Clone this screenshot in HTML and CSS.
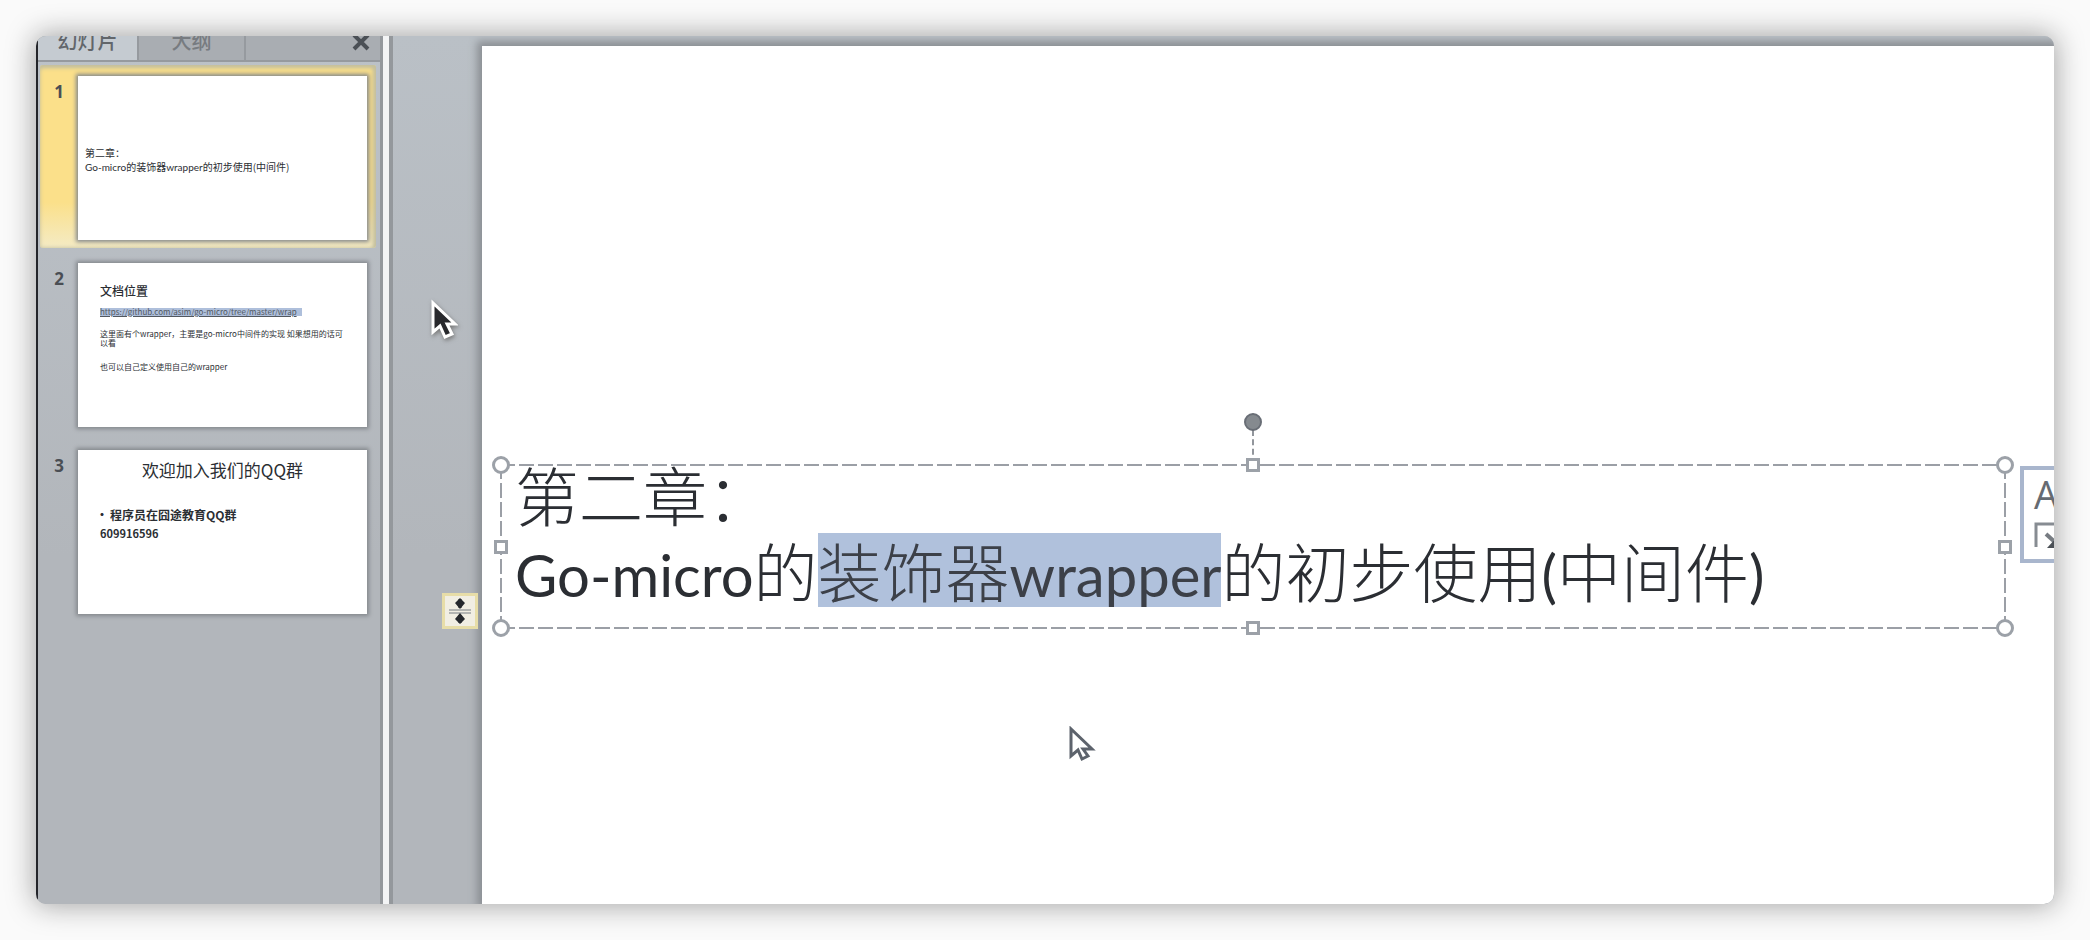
FILE: index.html
```html
<!DOCTYPE html>
<html lang="zh-CN">
<head>
<meta charset="utf-8">
<title>幻灯片</title>
<link rel="stylesheet" href="styles.css">
</head>
<body>
<main class="window">
  <aside class="sidebar">
    <nav class="tabs">
      <button class="tab tab-active">幻灯片</button>
      <button class="tab">大纲</button>
      <button class="close" aria-label="关闭"><svg width="20" height="20" viewBox="0 0 20 20"><path d="M3 3l14 14M17 3L3 17" stroke="#4b5056" stroke-width="4"/></svg></button>
    </nav>
    <ol class="slides">
      <li class="item item-active"><span class="number">1</span>
        <div class="thumb thumb-title"><p>第二章：</p><p><span class="small-latin">Go-micro</span>的装饰器<span class="small-latin">wrapper</span>的初步使用(中间件)</p></div></li>
      <li class="item"><span class="number">2</span>
        <div class="thumb thumb-doc"><h3>文档位置</h3><a href="#">https://github.com/asim/go-micro/tree/master/wrap</a><p>这里面有个wrapper，主要是go-micro中间件的实现 如果想用的话可以看</p><p class="last">也可以自己定义使用自己的wrapper</p></div></li>
      <li class="item"><span class="number">3</span>
        <div class="thumb thumb-group"><h3>欢迎加入我们的QQ群</h3><p class="bullet">程序员在囧途教育QQ群</p><p class="group-number">609916596</p></div></li>
    </ol>
  </aside>
  <div class="splitter"></div>
  <section class="workspace">
    <article class="slide">
      <div class="textbox">
        <h1>第二章：<br><span class="latin">Go-micro</span>的<mark>装饰器<span class="latin">wrapper</span></mark>的初步使用<span class="latin">(</span>中间件<span class="latin">)</span></h1>
        <span class="stem"></span><span class="rotate"></span>
        <i class="handle round top left"></i><i class="handle top center"></i><i class="handle round top right"></i>
        <i class="handle middle left"></i><i class="handle middle right"></i>
        <i class="handle round bottom left"></i><i class="handle bottom center"></i><i class="handle round bottom right"></i>
      </div>
      <div class="minibar"><span>A</span><svg width="32" height="30" viewBox="0 0 32 30"><path d="M2 25V2h30" fill="none" stroke="#878c92" stroke-width="3"/><path d="M12 12l10 9" stroke="#777c82" stroke-width="4"/><path d="M24 14v12H13z" fill="#4b5056"/></svg></div>
      <svg class="pointer-light" width="28" height="38" viewBox="0 0 28 38"><path d="M3 3v27l7-6 4 9 6-3-5-7h9z" fill="#fff" stroke="#5d636c" stroke-width="3"/></svg>
    </article>
    <button class="fit" aria-label="自动调整选项"><svg width="24" height="26" viewBox="0 0 24 26"><path d="M1 12h22M1 15h22" stroke="#777c82" stroke-width="1"/><path d="M12 1v9M12 17v8" stroke="#25282d" stroke-width="3"/><path d="M7 5l5-5 5 5-5 6zM7 21l5 5 5-5-5-6z" fill="#25282d"/></svg></button>
    <svg class="pointer-dark" width="28" height="42" viewBox="0 0 28 42"><path d="M3 4v29l7-6 5 11 7-3-5-10h8z" fill="#28292d" stroke="#fff" stroke-width="3"/></svg>
  </section>
</main>
</body>
</html>
```
FILE: styles.css
```css
* { box-sizing: border-box; }
body { margin: 0; min-height: 100vh; padding: 36px; display: flex; background: #fafafa; font-family: "Noto Sans CJK SC", sans-serif; color: #2b2e33; }
h1, h3, p, ol { margin: 0; padding: 0; font-weight: 400; }
button { border: 0; padding: 0; font-family: inherit; }
.window { flex: 1; display: flex; overflow: hidden; border-radius: 10px; box-shadow: 0 0 28px 2px #a4a4a4; background: #b2b6bb; }
.sidebar { width: 344px; flex: none; border-left: 2px solid #24252a; background: linear-gradient(#bcc2c8, #b2b6bb 60%); }
.tabs { display: flex; height: 26px; background: #a9adb2; border-bottom: 2px solid #969a9f; overflow: hidden; }
.tab { width: 107px; height: 26px; border-right: 2px solid #969a9f; background: #a9adb2; font-size: 20px; line-height: 10px; padding-bottom: 16px; font-weight: 500; color: #777b80; }
.tab-active { width: 101px; background: #c5cbd1; color: #62666b; }
.close { margin-left: auto; margin-right: 9px; width: 20px; height: 20px; background: none; display: flex; }
.close svg { margin-top: -4px; }
.slides { list-style: none; padding: 3px 4px 0 2px; }
.item { display: flex; padding: 11px 9px 8px 0; height: 183px; margin-bottom: 4px; }
.item-active { background: linear-gradient(#fbe08a 75%, #f4ebc5); box-shadow: inset -3px 0 4px #c3bf9e, inset 0 3px 4px #c3bf9e; border-radius: 3px; }
.number { width: 38px; flex: none; text-align: center; font: bold 17px/32px "Open Sans", sans-serif; color: #4a4e54; }
.thumb { flex: 1; height: 164px; background: #fff; box-shadow: 0 0 4px 2px #84888d; overflow: hidden; }
.thumb-title { padding: 70px 0 0 7px; font-size: 10px; line-height: 14px; font-weight: 700; white-space: nowrap; }
.small-latin { font-family: Lato, sans-serif; font-size: 10px; }
.thumb-doc { padding: 18px 22px 0; font-size: 8px; line-height: 9px; font-weight: 700; }
.thumb-doc h3 { font-size: 12px; line-height: 20px; font-weight: 500; }
.thumb-doc a { display: block; width: 202px; margin: 7px 0 13px; background: #aebfdb; color: #52585f; font-size: 8px; line-height: 8px; font-weight: 400; white-space: nowrap; }
.thumb-doc .last { margin-top: 15px; }
.thumb-group h3 { padding-top: 8px; text-align: center; font-size: 17px; line-height: 24px; }
.thumb-group .bullet { margin: 23px 0 0 18px; font-size: 12px; line-height: 20px; font-weight: 700; }
.bullet::before { content: "•"; margin-right: 2px; }
.group-number { padding-left: 22px; font-size: 11px; line-height: 16px; font-weight: 700; }
.splitter { width: 13px; flex: none; border: solid #94989c; border-width: 0 4px 0 3px; background: #f3f4f5; }
.workspace { position: relative; flex: 1; min-width: 0; display: flex; padding: 10px 0 0 89px; background: linear-gradient(#bac0c6, #b2b6bb 60%); }
.slide { position: relative; flex: 1; background: #fff; box-shadow: 0 0 8px 5px #8b8f94; }
.textbox { position: absolute; top: 418px; left: 18px; right: 48px; height: 165px; padding: 0 0 0 15px; background: repeating-linear-gradient(90deg, #9b9fa6 0 15px, transparent 15px 19px) top / 100% 2px no-repeat, repeating-linear-gradient(90deg, #9b9fa6 0 15px, transparent 15px 19px) bottom / 100% 2px no-repeat, repeating-linear-gradient(#9b9fa6 0 15px, transparent 15px 19px) left / 2px 100% no-repeat, repeating-linear-gradient(#9b9fa6 0 15px, transparent 15px 19px) right / 2px 100% no-repeat; }
h1 { font-size: 64px; line-height: 76px; font-weight: 300; white-space: nowrap; margin-top: -9px; }
.latin { font-family: Lato, sans-serif; font-size: 58px; font-weight: 400; }
mark { display: inline-block; height: 76px; color: #3c4048; background: linear-gradient(transparent 2px, #b0c1dc 2px); vertical-align: top; }
.handle { position: absolute; width: 14px; height: 14px; border: 3px solid #9ca1a8; background: #fff; }
.round { width: 18px; height: 18px; border-radius: 50%; }
.top { top: -6px; } .bottom { bottom: -6px; } .left { left: -6px; } .right { right: -6px; }
.round.top { top: -8px; } .round.bottom { bottom: -8px; } .round.left { left: -8px; } .round.right { right: -8px; }
.center { left: calc(50% - 7px); } .middle { top: calc(50% - 7px); }
.rotate { position: absolute; left: calc(50% - 9px); top: -51px; width: 18px; height: 18px; border-radius: 50%; background: #858a8f; border: 2px solid #696e76; }
.stem { position: absolute; left: calc(50% - 1px); top: -34px; height: 34px; border-left: 2px dashed #92969c; }
.minibar { position: absolute; top: 420px; right: -30px; width: 64px; height: 97px; padding: 0 0 0 10px; border: 4px solid #a9b6cd; background: #fff; font: 38px/48px "Open Sans", sans-serif; color: #666b72; }
.minibar span, .minibar svg { display: block; }
.minibar svg { margin-top: 4px; }
.pointer-light { position: absolute; left: 586px; top: 680px; }
.fit { position: absolute; left: 52px; top: 557px; width: 36px; height: 36px; padding: 2px; border: 3px solid #e7dda8; background: #f1eee3; display: grid; place-items: center; }
.fit { left: 49px; }
.pointer-dark { position: absolute; left: 37px; top: 263px; filter: drop-shadow(1px 2px 2px #777); }
```
